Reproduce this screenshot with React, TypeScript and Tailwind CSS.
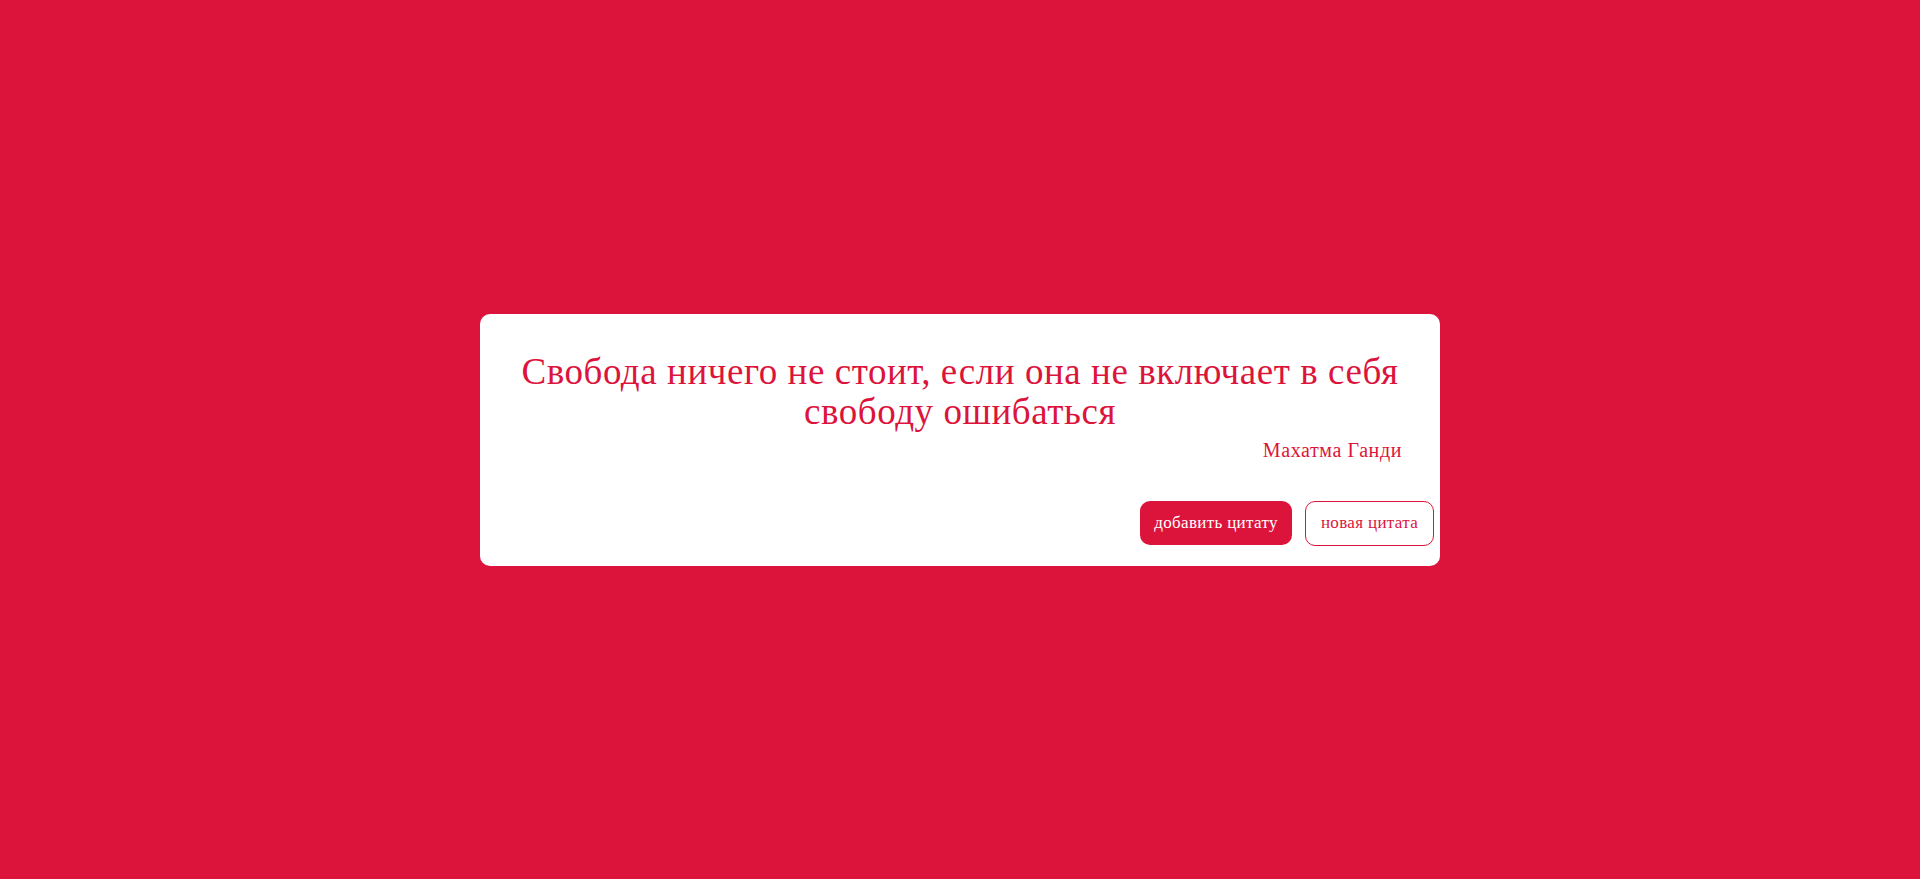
import React from "react";

export default function App() {
  return (
    <div
      className="w-full h-[879px] bg-[#dc143c] flex items-center justify-center"
      style={{ fontFamily: '"Liberation Serif", serif' }}
    >
      <div className="w-[960px] h-[252px] bg-white rounded-[10px] flex flex-col">
        <p className="pt-[38px] px-[30px] text-center text-[#dc143c] text-[37px] leading-[40px] tracking-[0.015em]">
          Свобода ничего не стоит, если она не включает в себя свободу ошибаться
        </p>
        <p className="mt-[4px] pr-[38px] text-right text-[#dc143c] text-[20px] leading-[28px] tracking-[0.03em]">
          Махатма Ганди
        </p>
        <div className="mt-[37px] flex justify-end gap-[13px] pr-[6px]">
          <button className="w-[152px] h-[44px] rounded-[10px] bg-[#dc143c] text-white text-[17px] tracking-[0.02em]">
            добавить цитату
          </button>
          <button className="w-[129px] h-[45px] rounded-[10px] bg-white border border-[#dc143c] text-[#dc143c] text-[17px] tracking-[0.02em]">
            новая цитата
          </button>
        </div>
      </div>
    </div>
  );
}
